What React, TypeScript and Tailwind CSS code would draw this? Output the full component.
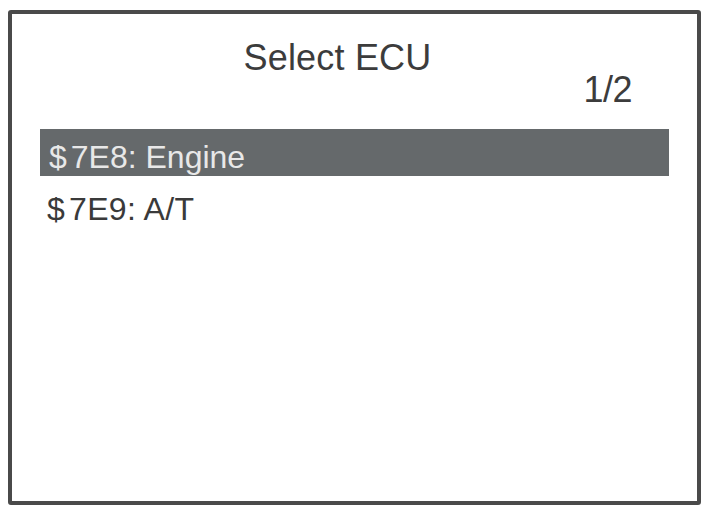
export default function App() {
  const font = { fontFamily: "'Liberation Sans', Arial, sans-serif" };
  return (
    <div className="w-[707px] h-[509px] bg-white pt-[10px] pl-[8px]" style={font}>
      <div className="w-[693px] h-[495px] border-4 border-[#4a4a4a] rounded-[3px] bg-white">
        {/* header */}
        <div className="pt-[24px] pr-[34px] text-center text-[36px] leading-[40px] text-[#3c3c3c] tracking-[0.2px]">
          Select ECU
        </div>
        <div className="-mt-[8px] pr-[65px] text-right text-[36px] leading-[40px] text-[#3c3c3c] tracking-[-0.5px]">
          1/2
        </div>

        {/* list */}
        <div className="mt-[19px] mx-[28px]">
          <div className="h-[47px] bg-[#65696b] pl-[9px] text-[32px] leading-[56px] text-[#e8e8e8] overflow-hidden">
            <span className="mr-[4px]">$</span>7E8: Engine
          </div>
          <div className="mt-[13px] pl-[7px] text-[32px] leading-[40px] text-[#3a3a3a] tracking-[0.3px]">
            <span className="mr-[4px]">$</span>7E9: A/T
          </div>
        </div>
      </div>
    </div>
  );
}
